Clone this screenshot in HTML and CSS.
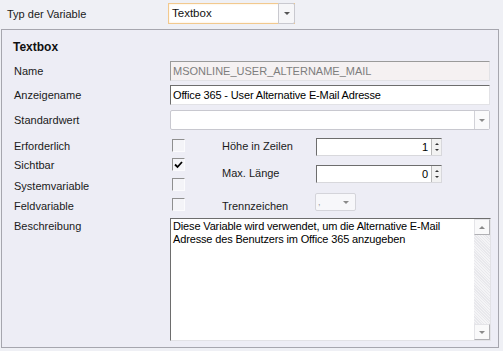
FILE: index.html
```html
<!DOCTYPE html>
<html lang="de">
<head>
    <meta charset="UTF-8">
    <title>Variable bearbeiten</title>
    <link rel="stylesheet" href="styles.css">
</head>
<body>
    <div class="top-row">
        <span class="top-label">Typ der Variable</span>
        <div class="combo combo-focus">
            <span class="combo-text">Textbox</span>
            <span class="combo-btn"><span class="tri"></span></span>
        </div>
    </div>

    <!-- Textbox settings -->
    <div class="panel">
        <div class="panel-title">Textbox</div>

        <div class="row">
            <span class="lbl">Name</span>
            <div class="field field-disabled">MSONLINE_USER_ALTERNAME_MAIL</div>
        </div>
        <div class="row row-gap4">
            <span class="lbl">Anzeigename</span>
            <div class="field">Office 365 - User Alternative E-Mail Adresse</div>
        </div>
        <div class="row">
            <span class="lbl">Standardwert</span>
            <div class="field field-combo">
                <span class="combo-text"></span>
                <span class="small-btn"><span class="tri tri-light"></span></span>
            </div>
        </div>

        <div class="options">
            <span class="lbl opt-l1">Erforderlich</span>
            <span class="check opt-c1"></span>
            <span class="lbl opt-l2">Sichtbar</span>
            <span class="check opt-c2">
                <svg width="9" height="8" viewBox="0 0 9 8"><path d="M1 3.5 L3.5 6 L8 1" fill="none" stroke="#000" stroke-width="1.8"/></svg>
            </span>
            <span class="lbl opt-l3">Systemvariable</span>
            <span class="check opt-c3"></span>
            <span class="lbl opt-l4">Feldvariable</span>
            <span class="check opt-c4"></span>

            <span class="lbl side-l1">Höhe in Zeilen</span>
            <div class="spin side-c1">
                <span class="spin-val">1</span>
                <span class="spin-btns"><span class="tri-up"></span><span class="tri-dn"></span></span>
            </div>
            <span class="lbl side-l2">Max. Länge</span>
            <div class="spin side-c2">
                <span class="spin-val">0</span>
                <span class="spin-btns"><span class="tri-up"></span><span class="tri-dn"></span></span>
            </div>
            <span class="lbl side-l3">Trennzeichen</span>
            <div class="sep-combo side-c3">
                <span class="sep-val">,</span>
                <span class="tri tri-light"></span>
            </div>
        </div>

        <div class="desc-row">
            <span class="lbl desc-lbl">Beschreibung</span>
            <div class="memo">
                <div class="memo-text">Diese Variable wird verwendet, um die Alternative E-Mail Adresse des Benutzers im Office 365 anzugeben</div>
                <div class="scroll">
                    <span class="scroll-btn"><span class="tri-up tri-light-up"></span></span>
                    <span class="scroll-btn"><span class="tri tri-light"></span></span>
                </div>
            </div>
        </div>
    </div>
</body>
</html>
```

FILE: styles.css
```css
body {
    margin: 0;
    background-color: #eff0f5;
    font-family: "Liberation Sans", Arial, sans-serif;
    font-size: 11px;
    color: #1a1a1a;
}

.top-row {
    display: flex;
    align-items: flex-start;
    height: 29px;
}

.top-label {
    width: 161px;
    padding-left: 7px;
    line-height: 14px;
    margin-top: 7px;
}

.combo {
    display: flex;
    width: 127px;
    height: 21px;
    margin-top: 3px;
    box-sizing: border-box;
    background: #fff;
}

.combo-focus {
    border: 1px solid #f2c98e;
    box-shadow: inset 0 0 2px #fbe3c2;
}

.combo-text {
    flex: 1;
    padding-left: 3px;
    line-height: 19px;
    font-size: 11.5px;
    color: #111;
}

.combo-btn {
    width: 15px;
    border-left: 1px solid #c9c9cf;
    background: #f6f6f8;
    display: flex;
    align-items: center;
    justify-content: center;
    margin: -1px -1px -1px 0;
    border-top: 1px solid #c9c9cf;
    border-right: 1px solid #c9c9cf;
    border-bottom: 1px solid #c9c9cf;
    border-radius: 0 2px 2px 0;
}

.tri {
    width: 0;
    height: 0;
    border-left: 3px solid transparent;
    border-right: 3px solid transparent;
    border-top: 3px solid #555;
}

.tri-light {
    border-top-color: #8a8a8a;
}

.tri-up {
    width: 0;
    height: 0;
    border-left: 2px solid transparent;
    border-right: 2px solid transparent;
    border-bottom: 2px solid #333;
}

.tri-dn {
    width: 0;
    height: 0;
    border-left: 2px solid transparent;
    border-right: 2px solid transparent;
    border-top: 2px solid #333;
}

.tri-light-up {
    border-left-width: 3px;
    border-right-width: 3px;
    border-bottom: 3px solid #8a8a8a;
}

.panel {
    width: 498px;
    height: 319px;
    margin-left: 1px;
    box-sizing: border-box;
    border: 1px solid #a6a6ae;
    background: #ededf5;
    padding: 9px 0 6px 0;
}

.panel-title {
    font-weight: bold;
    font-size: 12px;
    line-height: 17px;
    padding-left: 11px;
    color: #111;
}

.row {
    display: flex;
    align-items: center;
    margin-top: 5px;
    height: 20px;
}

.row-gap4 {
    margin-top: 4px;
}

.lbl {
    line-height: 14px;
}

.row .lbl {
    width: 156px;
    padding-left: 12px;
}

.field {
    width: 320px;
    height: 20px;
    box-sizing: border-box;
    background: #fff;
    border-top: 1px solid #6d6d6d;
    border-left: 1px solid #6d6d6d;
    border-right: 1px solid #e2e2e6;
    border-bottom: 1px solid #e2e2e6;
    padding-left: 2px;
    line-height: 18px;
    color: #000;
    letter-spacing: -0.15px;
}

.field-disabled {
    background: #f5f1f2;
    color: #7d7d7d;
    border-top-color: #9a9a9a;
    border-left-color: #9a9a9a;
    letter-spacing: 0;
}

.field-combo {
    display: flex;
    border: 1px solid #c8c8cf;
    border-radius: 2px;
    padding: 0;
}

.small-btn {
    width: 14px;
    border-left: 1px solid #d2d2d8;
    display: flex;
    align-items: center;
    justify-content: center;
    background: #fafafb;
}

.options {
    display: grid;
    grid-template-columns: 168px 52px 94px 130px;
    grid-template-rows: 20px 20px 20px 20px;
    margin-top: 6px;
}

.options .lbl {
    padding-left: 12px;
    align-self: center;
}

.check {
    width: 13px;
    height: 13px;
    box-sizing: border-box;
    border-top: 1px solid #8f8f8f;
    border-left: 1px solid #8f8f8f;
    border-right: 1px solid #fbfbfd;
    border-bottom: 1px solid #fbfbfd;
    background: #f4f4f8;
    margin-left: 2px;
    align-self: center;
    display: flex;
    align-items: center;
    justify-content: center;
}

.opt-l1 { grid-row: 1; grid-column: 1; }
.opt-c1 { grid-row: 1; grid-column: 2; margin-top: -2px; }
.opt-l2 { grid-row: 2; grid-column: 1; margin-top: -2px; }
.opt-c2 { grid-row: 2; grid-column: 2; margin-top: -3px; }
.opt-l3 { grid-row: 3; grid-column: 1; }
.opt-c3 { grid-row: 3; grid-column: 2; margin-top: -3px; }
.opt-l4 { grid-row: 4; grid-column: 1; margin-top: -1px; }
.opt-c4 { grid-row: 4; grid-column: 2; margin-top: -3px; }

.options .side-l1,
.options .side-l2,
.options .side-l3 {
    padding-left: 0;
    grid-column: 3;
}

.side-l1 { grid-row: 1; }
.side-l2 { grid-row: 2 / 4; margin-top: -6px; }
.side-l3 { grid-row: 4; margin-top: -1px; }

.spin {
    grid-column: 4;
    display: flex;
    width: 126px;
    height: 18px;
    box-sizing: border-box;
    background: #fff;
    border-top: 1px solid #6d6d6d;
    border-left: 1px solid #6d6d6d;
    border-right: 1px solid #d8d8dc;
    border-bottom: 1px solid #d8d8dc;
}

.side-c1 { grid-row: 1; align-self: start; margin-top: 2px; }
.side-c2 { grid-row: 2 / 4; align-self: start; margin-top: 9px; }

.spin-val {
    flex: 1;
    text-align: right;
    line-height: 16px;
    padding-right: 3px;
    color: #000;
}

.spin-btns {
    width: 9px;
    display: flex;
    flex-direction: column;
    align-items: center;
    justify-content: space-around;
    border-left: 1px solid #b9b9b9;
    background: #f2f2f2;
    padding: 2px 0;
}

.sep-combo {
    grid-column: 4;
    grid-row: 4;
    align-self: start;
    margin-top: -3px;
    margin-left: -1px;
    width: 41px;
    height: 18px;
    box-sizing: border-box;
    border: 1px solid #d4d4da;
    border-radius: 2px;
    background: #f7f7fa;
    display: flex;
    align-items: center;
    padding-right: 6px;
}

.sep-val {
    flex: 1;
    padding-left: 2px;
    color: #999;
    font-size: 9px;
    line-height: 14px;
}

.desc-row {
    display: flex;
    align-items: flex-start;
}

.desc-lbl {
    width: 156px;
    padding-left: 12px;
    margin-top: 3px;
}

.memo {
    display: flex;
    width: 321px;
    height: 123px;
    margin-top: 2px;
    box-sizing: border-box;
    background: #fff;
    border-top: 1px solid #6d6d6d;
    border-left: 1px solid #6d6d6d;
    border-right: 1px solid #e2e2e6;
    border-bottom: 1px solid #e2e2e6;
}

.memo-text {
    flex: 1;
    padding: 1px 0 0 2px;
    line-height: 13px;
    color: #000;
    letter-spacing: -0.15px;
}

.scroll {
    width: 16px;
    display: flex;
    flex-direction: column;
    justify-content: space-between;
    background-color: #f4f4f6;
    background-image: repeating-linear-gradient(45deg, #e8e8ec 0 1px, transparent 1px 2px);
}

.scroll-btn {
    height: 16px;
    box-sizing: border-box;
    border: 1px solid #e4e4e8;
    border-right-color: #b0b0b4;
    border-bottom-color: #b0b0b4;
    background: #f9f9fa;
    display: flex;
    align-items: center;
    justify-content: center;
}
```
